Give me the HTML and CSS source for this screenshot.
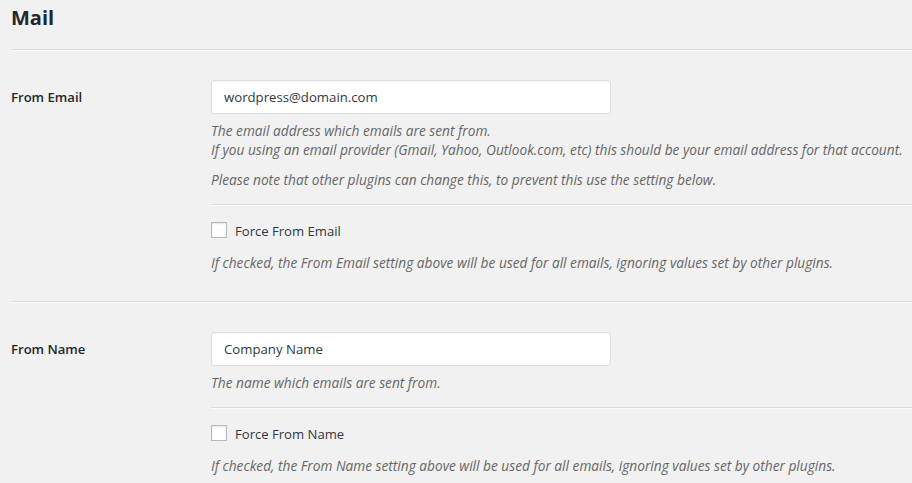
FILE: index.html
```html
<!DOCTYPE html>
<html>
<head>
<meta charset="utf-8">
<link rel="stylesheet" href="styles.css">
</head>
<body>
<div class="page">
  <h2 class="title">Mail</h2>
  <hr class="sep">
  <div class="row">
    <div class="label">From Email</div>
    <div class="field">
      <input class="text" type="text" value="wordpress@domain.com">
      <p class="desc first">The email address which emails are sent from.<br>If you using an email provider (Gmail, Yahoo, Outlook.com, etc) this should be your email address for that account.</p>
      <p class="desc">Please note that other plugins can change this, to prevent this use the setting below.</p>
      <hr class="sep inner">
      <label class="check"><span class="box"></span>Force From Email</label>
      <p class="desc after">If checked, the From Email setting above will be used for all emails, ignoring values set by other plugins.</p>
    </div>
  </div>
  <hr class="sep">
  <div class="row">
    <div class="label">From Name</div>
    <div class="field">
      <input class="text" type="text" value="Company Name">
      <p class="desc first">The name which emails are sent from.</p>
      <hr class="sep inner">
      <label class="check"><span class="box"></span>Force From Name</label>
      <p class="desc after">If checked, the From Name setting above will be used for all emails, ignoring values set by other plugins.</p>
    </div>
  </div>
</div>
</body>
</html>
```
FILE: styles.css
```css
html, body {
  margin: 0;
  padding: 0;
  background: #f1f1f1;
}
body {
  font-family: "Open Sans", "Noto Sans", sans-serif;
  font-size: 13px;
  color: #23282d;
  overflow: hidden;
}
.page {
  padding-left: 11px;
}
.title {
  margin: 0;
  padding-top: 4px;
  height: 45px;
  font-size: 20px;
  font-weight: 700;
  line-height: 28px;
  color: #23282d;
}
.sep {
  margin: 0;
  height: 0;
  border: 0;
  border-top: 1px solid #dddddd;
  border-bottom: 1px solid #fafafa;
}
.row {
  display: grid;
  grid-template-columns: 200px 1fr;
  padding-top: 29px;
  padding-bottom: 29px;
}
.label {
  font-size: 13.1px;
  font-weight: 600;
  line-height: 34px;
  color: #23282d;
}
.field {
  display: flex;
  flex-direction: column;
  align-items: flex-start;
}
.text {
  box-sizing: border-box;
  width: 400px;
  height: 34px;
  margin: 0;
  padding: 0 12px;
  border: 1px solid #dddddd;
  border-radius: 3px;
  background: #fff;
  box-shadow: inset 0 1px 2px rgba(0,0,0,0.04);
  font-family: inherit;
  font-size: 13.2px;
  color: #32373c;
  outline: none;
}
.desc {
  margin: 11px 0 0;
  font-style: italic;
  font-size: 13.7px;
  line-height: 19px;
  color: #666;
}
.desc.first {
  margin-top: 7px;
}
.desc.after {
  margin-top: 13px;
}
.inner {
  align-self: stretch;
  margin-top: 15px;
}
.check {
  display: flex;
  align-items: center;
  margin-top: 16px;
  font-size: 13.1px;
  line-height: 18px;
  color: #32373c;
}
.check .box {
  position: relative;
  top: -1px;
}
.box {
  box-sizing: border-box;
  width: 16px;
  height: 16px;
  margin-right: 8px;
  border: 1px solid #b4b9be;
  background: #fff;
  box-shadow: inset 0 1px 2px rgba(0,0,0,0.1);
}
```
